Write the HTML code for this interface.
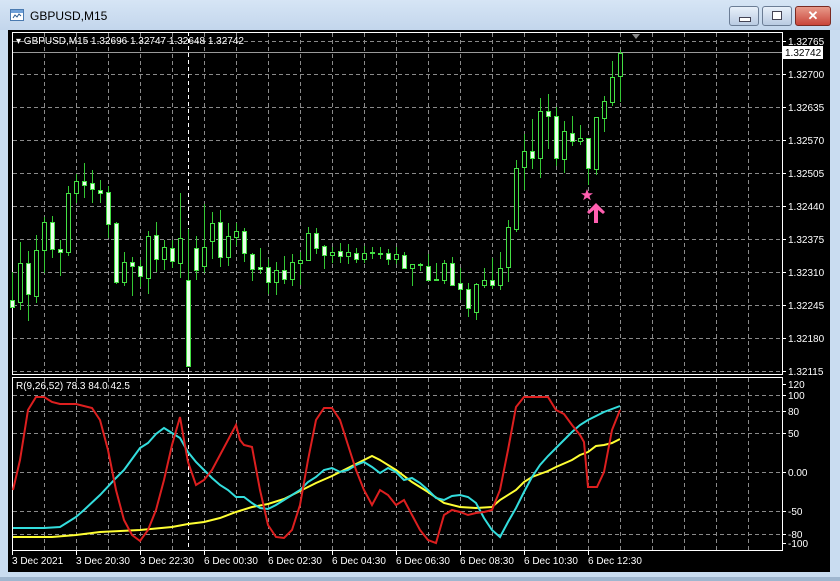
<!DOCTYPE html>
<html><head><meta charset="utf-8"><style>
*{margin:0;padding:0}
body{width:840px;height:581px;overflow:hidden;background:#c9dcf0;font-family:"Liberation Sans",sans-serif;position:relative}
.title{position:absolute;left:30px;top:9px;font-size:12px;color:#000}
.btn{position:absolute;top:6px;height:18px;border:1px solid #6b7d95;border-radius:3px;background:linear-gradient(#e8f0fa,#b9cbe2)}
#chart{position:absolute;left:0;top:0}
</style></head><body>
<div style="position:absolute;left:0;top:0;width:840px;height:30px;background:linear-gradient(#d6e5f5,#c3d6ec)"></div>
<svg style="position:absolute;left:10px;top:9px" width="15" height="13"><rect x="0.5" y="0.5" width="13" height="11" fill="#fff" stroke="#4a7ab0"/><rect x="1" y="1" width="12" height="3" fill="#6fa0d8"/><path d="M3 9 L5 6 L7 8 L9 5 L11 7" stroke="#2a5a90" fill="none"/></svg>
<div class="title">GBPUSD,M15</div>
<div class="btn" style="left:729px;width:28px"><div style="position:absolute;left:9px;top:10px;width:10px;height:3px;background:#fff;border:1px solid #445"></div></div>
<div class="btn" style="left:762px;width:28px"><div style="position:absolute;left:9px;top:4px;width:8px;height:7px;border:1px solid #445;background:#fff"></div></div>
<div class="btn" style="left:795px;width:34px;background:linear-gradient(#e89a8a,#c9453a);border-color:#7a2a22;color:#fff;font-weight:bold;font-size:13px;text-align:center;line-height:18px">✕</div>
<div style="position:absolute;left:8px;top:30px;width:822px;height:542px;background:#000"></div>
<div style="position:absolute;left:0;top:577px;width:840px;height:4px;background:#9fb6cf"></div>
<svg id="chart" width="840" height="581" font-family="Liberation Sans, sans-serif" font-size="10">
<g id="grid" stroke="#8a8a8a" stroke-dasharray="4,3" stroke-width="1"></g>
<line x1="188.5" y1="32" x2="188.5" y2="550" stroke="#fff" stroke-dasharray="4,3"/>
<rect x="12.5" y="32.5" width="770" height="342" fill="none" stroke="#fff"/>
<rect x="12.5" y="377.5" width="770" height="173" fill="none" stroke="#fff"/>
<line x1="13" y1="52.5" x2="782" y2="52.5" stroke="#9a9a9a"/>
<g id="candles"></g>
<g id="osc" fill="none" stroke-width="2"></g>
<text x="16" y="44" fill="#fff">▾ GBPUSD,M15  1.32696 1.32747 1.32648 1.32742</text>
<text x="16" y="389" fill="#fff">R(9,26,52) 78.3 84.0 42.5</text>
<g id="axis" fill="#fff"></g>
<rect x="782" y="46" width="41" height="13" fill="#fff"/>
<text x="785" y="56" fill="#000">1.32742</text>
<path d="M632 34 l8 0 l-4 5z" fill="#888"/>
<path d="M587 189 l1.6 4.2 4.4 0 -3.6 2.7 1.4 4.3 -3.8 -2.6 -3.8 2.6 1.4 -4.3 -3.6 -2.7 4.4 0z" fill="#ff5fb0"/>
<path d="M596 203 l9 9 -2 2 -5 -4 0 13 -4 0 0 -13 -5 4 -2 -2z" fill="#ff5fb0"/>
</svg>
<script>
var ns="http://www.w3.org/2000/svg";
function el(p,t,a){var e=document.createElementNS(ns,t);for(var k in a)e.setAttribute(k,a[k]);p.appendChild(e);return e;}
var g=document.getElementById('grid');
for(var x=44;x<=748;x+=32){if(x==188)continue;el(g,'line',{x1:x+.5,y1:33,x2:x+.5,y2:374});el(g,'line',{x1:x+.5,y1:378,x2:x+.5,y2:550});}
for(var y=41;y<=372;y+=33)el(g,'line',{x1:13,y1:y+.5,x2:782,y2:y+.5});
[395,411,433,472,511,534].forEach(function(y){el(g,'line',{x1:13,y1:y+.5,x2:782,y2:y+.5});});
var ax=document.getElementById('axis');
var pr=["1.32765","1.32700","1.32635","1.32570","1.32505","1.32440","1.32375","1.32310","1.32245","1.32180","1.32115"];
pr.forEach(function(p,i){var y=41+33*i;el(ax,'line',{x1:782,y1:y+.5,x2:786,y2:y+.5,stroke:'#fff'});var t=el(ax,'text',{x:788,y:y+4});t.textContent=p;});
[["120",384],["100",395],["80",411],["50",433],["0.00",472],["-50",511],["-80",534],["-100",543]].forEach(function(a){el(ax,'line',{x1:782,y1:a[1]+.5,x2:786,y2:a[1]+.5,stroke:'#fff'});var t=el(ax,'text',{x:788,y:a[1]+4});t.textContent=a[0];});
var tl=["3 Dec 2021","3 Dec 20:30","3 Dec 22:30","6 Dec 00:30","6 Dec 02:30","6 Dec 04:30","6 Dec 06:30","6 Dec 08:30","6 Dec 10:30","6 Dec 12:30"];
tl.forEach(function(s,i){var x=12+64*i;el(ax,'line',{x1:x+.5,y1:550,x2:x+.5,y2:555,stroke:'#fff'});var t=el(ax,'text',{x:x,y:564});t.textContent=s;});
var C=[[300,307,272,308,1],[263,302,242,310,0],[263,294,251,321,1],[250,296,235,303,0],[222,250,217,273,0],[222,249,216,258,1],[249,252,240,276,1],[193,252,186,256,0],[181,193,174,203,0],[181,185,163,198,1],[183,189,170,203,1],[190,193,180,203,1],[192,224,186,238,1],[223,282,222,284,1],[262,282,252,286,0],[262,266,257,296,1],[266,276,260,287,1],[236,278,231,294,0],[235,259,222,272,1],[247,259,240,270,0],[248,261,240,268,1],[238,263,193,278,0],[280,366,229,367,1],[248,270,236,280,1],[247,266,204,273,0],[223,241,212,259,0],[222,257,210,267,1],[236,257,223,266,0],[231,237,223,246,0],[231,253,228,262,1],[254,269,253,281,1],[267,269,248,274,1],[267,282,259,294,1],[270,282,262,295,0],[270,279,256,284,1],[262,279,254,286,0],[260,263,252,285,0],[233,260,227,260,0],[233,248,228,254,1],[246,255,245,269,1],[252,255,247,263,0],[251,256,243,263,1],[252,256,244,264,0],[253,259,248,263,1],[253,259,246,263,0],[252,253,247,259,1],[253,254,247,259,1],[253,259,249,265,1],[254,259,247,264,0],[255,268,252,269,1],[264,268,264,286,0],[264,265,263,271,1],[266,280,254,280,1],[279,280,263,280,1],[263,280,260,284,0],[263,285,257,286,1],[283,289,268,300,1],[289,308,283,317,1],[284,312,283,320,0],[280,285,268,288,0],[280,285,258,289,1],[268,285,252,290,0],[227,267,220,282,0],[168,229,160,232,0],[151,167,134,190,0],[151,158,119,169,1],[111,158,98,178,0],[111,116,94,149,1],[116,158,107,166,1],[131,159,121,173,0],[133,141,116,146,1],[138,141,125,145,0],[138,168,138,185,1],[117,169,117,175,0],[101,118,96,132,0],[77,102,61,106,0],[53,76,50,102,0]];
var cg=document.getElementById('candles');
C.forEach(function(c,i){var x=12+8*i;el(cg,'line',{x1:x+.5,y1:c[2],x2:x+.5,y2:c[3],stroke:'#34c834'});var h=Math.max(c[1]-c[0],1);el(cg,'rect',{x:x-1.5,y:c[0]+.5,width:4,height:h,fill:c[4]?'#eaffea':'#000',stroke:'#44e044'});});
var og=document.getElementById('osc');
function pl(col,pts){el(og,'polyline',{points:pts,stroke:col});}
pl('#ffff33',"13,537 52,537 76,535 100,532 140,530 172,527 188,524 204,522 220,518 236,512 252,507 268,504 284,499 300,491 316,483 332,476 348,468 364,460 372,456 380,460 396,470 412,482 428,492 444,503 460,507 476,508 492,507 500,500 516,490 524,482 532,477 540,474 548,471 556,467 572,460 580,455 588,452 596,446 604,445 612,443 620,439");
pl('#33dddd',"13,528 44,528 60,527 68,522 76,517 84,510 100,495 116,478 124,470 140,448 148,443 156,434 164,428 172,433 180,438 188,452 196,462 204,470 212,478 220,485 228,490 236,497 244,497 252,503 260,508 268,509 276,505 284,500 292,495 300,490 308,482 316,477 324,470 332,468 340,472 348,470 356,465 364,462 372,467 380,473 388,468 396,472 404,480 412,478 420,483 428,490 436,498 444,500 452,496 460,495 468,497 476,503 484,518 492,530 500,537 508,522 516,508 524,492 532,477 540,465 548,456 556,448 564,440 572,432 580,425 588,420 596,416 604,412 612,409 620,406");
pl('#dd1f1f',"13,490 20,460 28,410 36,397 44,397 52,402 60,404 76,404 92,408 100,420 108,450 116,490 124,520 132,535 140,541 148,530 156,510 164,480 172,445 180,417 184,440 188,462 196,485 204,480 212,470 220,455 228,440 236,425 240,440 244,445 252,447 260,490 268,525 276,537 284,538 292,530 300,505 308,460 316,420 324,408 332,408 340,420 348,445 356,470 364,490 372,505 380,490 388,495 396,505 404,500 412,515 420,530 428,540 436,543 444,515 452,510 460,512 468,515 476,513 484,512 492,510 500,490 508,450 516,407 524,397 548,397 556,410 564,414 572,425 580,435 584,442 588,487 597,487 604,472 612,430 620,410");
</script>
</body></html>
